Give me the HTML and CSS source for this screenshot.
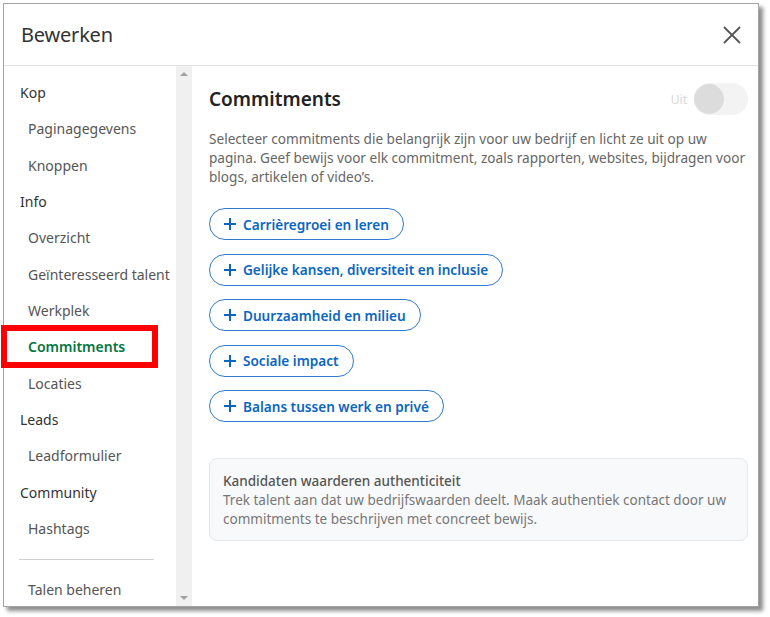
FILE: index.html
```html
<!DOCTYPE html>
<html lang="nl">
<head>
<meta charset="utf-8">
<title>Bewerken</title>
<link rel="stylesheet" href="styles.css">
</head>
<body>
<div class="dialog">
  <header class="dlg-head">
    <h1 class="dlg-title">Bewerken</h1>
    <button class="close" aria-label="Sluiten">
      <svg width="20" height="20" viewBox="0 0 20 20"><path d="M2 2 L18 18 M18 2 L2 18" stroke="#555" stroke-width="1.8" fill="none"/></svg>
    </button>
  </header>
  <div class="dlg-body">
    <nav class="side">
      <div class="nav-list">
        <div class="grp">Kop</div>
        <div class="item">Paginagegevens</div>
        <div class="item">Knoppen</div>
        <div class="grp">Info</div>
        <div class="item">Overzicht</div>
        <div class="item">Geïnteresseerd talent</div>
        <div class="item">Werkplek</div>
        <div class="item active">Commitments</div>
        <div class="item">Locaties</div>
        <div class="grp">Leads</div>
        <div class="item">Leadformulier</div>
        <div class="grp">Community</div>
        <div class="item">Hashtags</div>
        <hr class="divider">
        <div class="item">Talen beheren</div>
      </div>
      <div class="scrollbar">
        <span class="arrow up"></span>
        <span class="arrow down"></span>
      </div>
      <div class="highlight"></div>
    </nav>
    <main class="content">
      <div class="title-row">
        <h2 class="sec-title">Commitments</h2>
        <div class="toggle-wrap">
          <span class="toggle-label">Uit</span>
          <span class="toggle"><span class="knob"></span></span>
        </div>
      </div>
      <p class="desc">Selecteer commitments die belangrijk zijn voor uw bedrijf en licht ze uit op uw pagina. Geef bewijs voor elk commitment, zoals rapporten, websites, bijdragen voor blogs, artikelen of video’s.</p>
      <div class="pills">
        <button class="pill"><svg class="plus" width="14" height="14" viewBox="0 0 14 14"><path d="M7 1 V13 M1 7 H13" stroke="#0a66c2" stroke-width="2"/></svg>Carrièregroei en leren</button>
        <button class="pill"><svg class="plus" width="14" height="14" viewBox="0 0 14 14"><path d="M7 1 V13 M1 7 H13" stroke="#0a66c2" stroke-width="2"/></svg>Gelijke kansen, diversiteit en inclusie</button>
        <button class="pill"><svg class="plus" width="14" height="14" viewBox="0 0 14 14"><path d="M7 1 V13 M1 7 H13" stroke="#0a66c2" stroke-width="2"/></svg>Duurzaamheid en milieu</button>
        <button class="pill"><svg class="plus" width="14" height="14" viewBox="0 0 14 14"><path d="M7 1 V13 M1 7 H13" stroke="#0a66c2" stroke-width="2"/></svg>Sociale impact</button>
        <button class="pill"><svg class="plus" width="14" height="14" viewBox="0 0 14 14"><path d="M7 1 V13 M1 7 H13" stroke="#0a66c2" stroke-width="2"/></svg>Balans tussen werk en privé</button>
      </div>
      <div class="info">
        <div class="info-title">Kandidaten waarderen authenticiteit</div>
        <div class="info-text">Trek talent aan dat uw bedrijfswaarden deelt. Maak authentiek contact door uw commitments te beschrijven met concreet bewijs.</div>
      </div>
    </main>
  </div>
</div>
</body>
</html>
```
FILE: styles.css
```css
* { box-sizing: border-box; }
html, body { margin: 0; padding: 0; background: #fff; }
body {
  font-family: "Noto Sans", "Open Sans", sans-serif;
  color: #333;
  width: 770px;
  height: 617px;
  padding: 3px 0 0 3px;
}
.dialog {
  width: 756px;
  height: 604px;
  border: 1px solid #a3a3a3;
  background: #fff;
  box-shadow: 4px 4px 4px rgba(0,0,0,0.45);
  display: flex;
  flex-direction: column;
}
.dlg-head {
  height: 62px;
  flex: none;
  border-bottom: 1px solid #e2e2e2;
  display: flex;
  align-items: center;
  justify-content: space-between;
  padding: 0 16px 0 17px;
}
.dlg-title {
  margin: 0;
  font-size: 20px;
  font-weight: 400;
  color: #333;
  letter-spacing: -0.2px;
}
.close {
  border: 0;
  background: none;
  padding: 0;
  width: 20px;
  height: 20px;
  display: flex;
}
.dlg-body {
  flex: 1;
  display: flex;
  min-height: 0;
}
.side {
  position: relative;
  width: 188px;
  flex: none;
  display: flex;
}
.nav-list {
  width: 172px;
  padding-top: 16px;
  font-size: 14px;
}
.grp, .item {
  height: 36.35px;
  line-height: 22px;
  padding-left: 16px;
  color: #333;
}
.item { padding-left: 24px; color: #555; }
.item.active { color: #057642; font-weight: 600; }
.divider {
  margin: 5px 22px 19px 15px;
  border: 0;
  border-top: 1px solid #cfcfcf;
}
.scrollbar {
  width: 16px;
  background: #f0f0f0;
  position: relative;
}
.arrow {
  position: absolute;
  left: 4px;
  width: 0;
  height: 0;
  border-left: 4px solid transparent;
  border-right: 4px solid transparent;
}
.arrow.up { top: 6px; border-bottom: 4px solid #a3a3a3; }
.arrow.down { bottom: 6px; border-top: 4px solid #a3a3a3; }
.highlight {
  position: absolute;
  left: -3px;
  top: 259px;
  width: 157px;
  height: 43px;
  border: 6px solid #ff0000;
}
.content {
  flex: 1;
  padding: 17px 10px 0 17px;
}
.title-row {
  display: flex;
  justify-content: space-between;
  align-items: center;
  height: 32px;
}
.sec-title {
  margin: 0;
  font-size: 19px;
  font-weight: 600;
  color: #222;
}
.toggle-wrap { display: flex; align-items: center; gap: 7px; }
.toggle-label { font-size: 12px; color: #d8d8d8; }
.toggle {
  width: 54px;
  height: 32px;
  border-radius: 16px;
  background: #f3f3f3;
  display: flex;
  align-items: center;
}
.knob {
  width: 30px;
  height: 30px;
  border-radius: 50%;
  background: #dcdcdc;
}
.desc {
  margin: 14px 0 0;
  font-size: 13.6px;
  line-height: 19px;
  color: #666;
}
.pills {
  margin-top: 22px;
  display: flex;
  flex-direction: column;
  align-items: flex-start;
  gap: 13.5px;
}
.pill {
  height: 32px;
  border: 1.5px solid #2f7bd0;
  border-radius: 16px;
  background: #fff;
  color: #0a66c2;
  font-family: inherit;
  font-size: 13.6px;
  font-weight: 600;
  padding: 0 14px 0 13px;
  display: flex;
  align-items: center;
  gap: 6px;
}
.info {
  margin-top: 36px;
  background: #f8f9fb;
  border: 1px solid #e6e8eb;
  border-radius: 8px;
  padding: 12px 13px 11px;
}
.info-title {
  font-size: 13.5px;
  font-weight: 500;
  color: #555;
  line-height: 20px;
}
.info-text {
  font-size: 13.5px;
  color: #777;
  line-height: 19px;
}
```
